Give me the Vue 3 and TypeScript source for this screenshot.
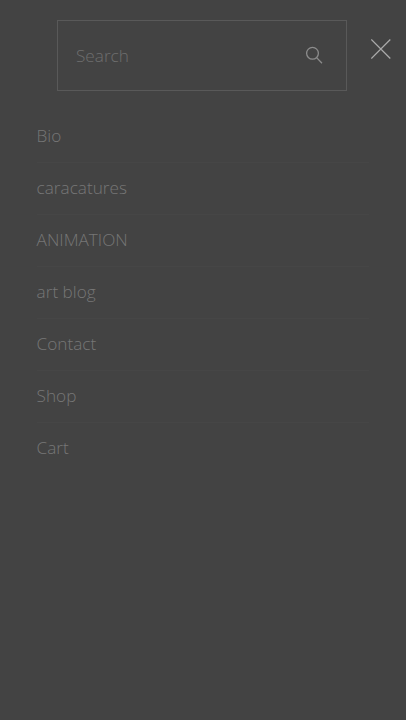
<script setup lang="ts">
const items: string[] = ['Bio', 'caracatures', 'ANIMATION', 'art blog', 'Contact', 'Shop', 'Cart']
</script>

<template>
  <div class="page">
    <header class="top">
      <form class="search" @submit.prevent>
        <input class="field" type="text" placeholder="Search" />
        <svg class="glass" width="18" height="18" viewBox="0 0 18 18" fill="none" stroke="currentColor">
          <circle cx="7.5" cy="7.3" r="5.9" stroke-width="1.3" />
          <path d="M11.6 11.6 L17 17.2" stroke-width="1.3" />
        </svg>
      </form>
      <button class="close" type="button" aria-label="Close">
        <svg width="20" height="20" viewBox="0 0 20 20" fill="none" stroke="currentColor" stroke-width="1.25">
          <path d="M0.3 0.5 L19.3 19.5 M19.3 0.5 L0.3 19.5" />
        </svg>
      </button>
    </header>
    <nav class="menu">
      <a v-for="item in items" :key="item" class="item" href="#">{{ item }}</a>
    </nav>
  </div>
</template>

<style>
html, body { margin: 0; background: #434343; }
</style>

<style scoped>
.page {
  width: 406px;
  height: 720px;
  overflow: hidden;
  background: #434343;
  font-family: "Open Sans", sans-serif;
  font-weight: 300;
}
.top {
  display: flex;
  align-items: flex-start;
  padding: 20px 0 0 57px;
}
.search {
  box-sizing: border-box;
  width: 290px;
  height: 71px;
  display: flex;
  align-items: center;
  border: 1px solid #595959;
  padding: 0 23px 0 18px;
}
.field {
  flex: 1;
  min-width: 0;
  border: 0;
  padding: 0;
  outline: 0;
  background: transparent;
  font: inherit;
  font-size: 17.2px;
  color: #6e6e6e;
}
.field::placeholder { color: #6e6e6e; opacity: 1; }
.glass { color: #8c8c8c; display: block; margin-top: -1px; }
.close {
  border: 0;
  padding: 0;
  background: none;
  margin: 19px 0 0 24px;
  color: #ababab;
  display: block;
  line-height: 0;
}
.menu {
  display: flex;
  flex-direction: column;
  margin: 20px 37px 0 36.6px;
}
.item {
  box-sizing: border-box;
  height: 52px;
  line-height: 50px;
  border-bottom: 1px solid #464646;
  font-size: 17.2px;
  color: #767676;
  text-decoration: none;
}
.item:last-child { border-bottom: 0; }
</style>
